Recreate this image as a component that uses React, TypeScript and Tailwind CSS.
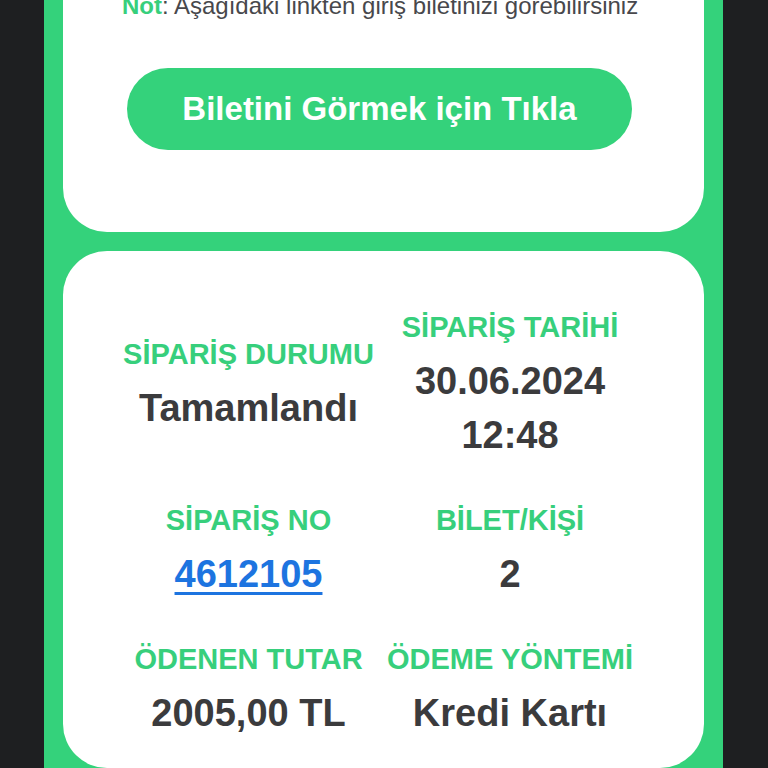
import React from "react";

const font = { fontFamily: '"Liberation Sans", Arial, Helvetica, sans-serif' };

function Cell({ label, lines, link }: { label: string; lines: string[]; link?: boolean }) {
  return (
    <div className="flex flex-col items-center justify-center text-center">
      <div className="text-[29px] leading-[54px] font-bold text-[#37cf7c] whitespace-nowrap">{label}</div>
      {lines.map((l) =>
        link ? (
          <a
            key={l}
            href="#"
            className="text-[38px] leading-[54px] font-bold text-[#1d74e0] underline decoration-[3px] underline-offset-[5px] whitespace-nowrap"
          >
            {l}
          </a>
        ) : (
          <div key={l} className="text-[38px] leading-[54px] font-bold text-[#3b3b3d] whitespace-nowrap">
            {l}
          </div>
        )
      )}
    </div>
  );
}

export default function App() {
  return (
    <div style={font} className="w-[768px] h-[768px] overflow-hidden bg-[#1e1f21] flex">
      <div className="ml-[44px] w-[679px] h-full bg-[#34d27b] px-[19px] flex flex-col gap-[19px]">
        <div className="-mt-[20px] bg-white rounded-b-[44px] pt-[12px] pb-[82px]">
          <div className="pl-[59px] text-[24px] leading-[28px] text-[#48484c] whitespace-nowrap">
            <span className="font-bold text-[#37cf7c]">Not</span>: Aşağıdaki linkten giriş biletinizi görebilirsiniz
          </div>
          <div className="ml-[64px] mt-[48px] w-[505px] h-[82px] rounded-full bg-[#34d27b] flex items-center justify-center">
            <span className="text-[33px] font-bold text-white whitespace-nowrap">Biletini Görmek için Tıkla</span>
          </div>
        </div>
        <div className="bg-white rounded-[44px] pt-[49px] pl-[59px] flex-1">
          <div className="grid grid-cols-[253px_248px] gap-x-[11px] gap-y-[31px]">
            <Cell label="SİPARİŞ DURUMU" lines={["Tamamlandı"]} />
            <Cell label="SİPARİŞ TARİHİ" lines={["30.06.2024", "12:48"]} />
            <Cell label="SİPARİŞ NO" lines={["4612105"]} link />
            <Cell label="BİLET/KİŞİ" lines={["2"]} />
            <Cell label="ÖDENEN TUTAR" lines={["2005,00 TL"]} />
            <Cell label="ÖDEME YÖNTEMİ" lines={["Kredi Kartı"]} />
          </div>
        </div>
      </div>
    </div>
  );
}
